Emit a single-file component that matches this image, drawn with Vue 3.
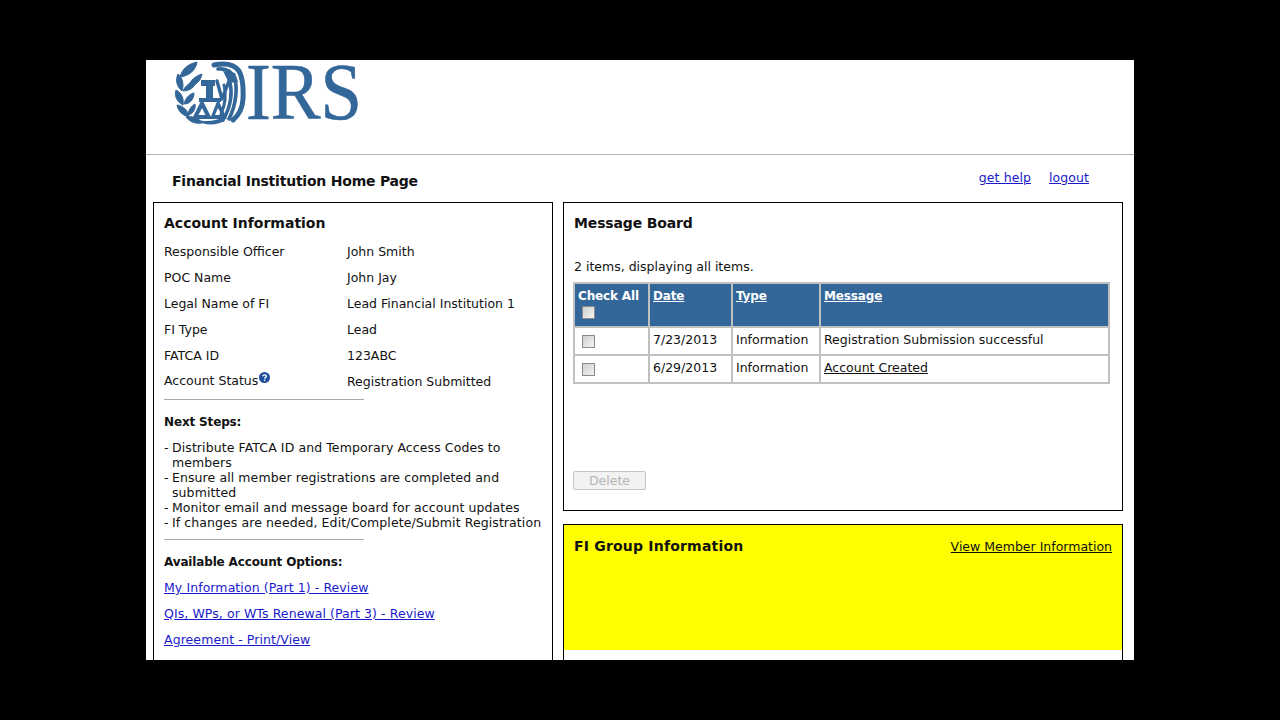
<script setup>
const accountRows = [
  { label: 'Responsible Officer', value: 'John Smith' },
  { label: 'POC Name', value: 'John Jay' },
  { label: 'Legal Name of FI', value: 'Lead Financial Institution 1' },
  { label: 'FI Type', value: 'Lead' },
  { label: 'FATCA ID', value: '123ABC' },
  { label: 'Account Status', value: 'Registration Submitted', help: true }
]

const nextSteps = [
  'Distribute FATCA ID and Temporary Access Codes to members',
  'Ensure all member registrations are completed and submitted',
  'Monitor email and message board for account updates',
  'If changes are needed, Edit/Complete/Submit Registration'
]

const options = [
  'My Information (Part 1) - Review',
  'QIs, WPs, or WTs Renewal (Part 3) - Review',
  'Agreement - Print/View'
]

const messages = [
  { date: '7/23/2013', type: 'Information', message: 'Registration Submission successful' },
  { date: '6/29/2013', type: 'Information', message: 'Account Created', link: true }
]
</script>

<template>
  <div class="screen">
    <div class="page">
      <header class="masthead">
        <div class="logo">
          <svg class="seal" viewBox="0 0 72 64" width="72" height="64" aria-hidden="true">
            <g fill="#336699" stroke="#336699" stroke-width="1">
              <!-- wreath -->
              <path d="M6 16 C8 8 14 3 23 1 C22 9 15 15 6 16Z" />
              <path d="M14 26 C16 20 21 15 28 13 C27 20 21 25 14 26Z" />
              <path d="M4 13 C1 19 3 26 8 30 C10 24 9 17 4 13Z" />
              <path d="M2 29 C0 35 3 41 9 44 C10 38 8 32 2 29Z" />
              <path d="M3 44 C4 50 8 54 15 56 C14 50 10 45 3 44Z" />
              <path d="M12 56 C16 61 21 63 28 62 C25 57 19 55 12 56Z" />
              <path d="M9 30 C11 25 16 21 22 20 C21 26 16 30 9 30Z" />
              <path d="M10 43 C11 38 15 33 20 32 C20 38 16 43 10 43Z" />
              <path d="M14 54 C14 50 17 45 21 43 C22 48 19 53 14 54Z" />
            </g>
            <g fill="#336699">
              <!-- eagle head, neck -->
              <path d="M27 19 L41 19 L41 25 L39 25 L39 40 L32 40 L32 25 L27 25Z" />
              <!-- scales -->
              <path fill-rule="evenodd" d="M28 38 L38 58 L18 58Z M28 47 L24.500 54 L31.500 54Z" />
              <path fill-rule="evenodd" d="M44 38 L53 58 L36 58Z M44 47 L41 54 L47.500 54Z" />
              <path d="M25 37 L47 37 L47 41 L25 41Z" />
              <path d="M20 58 C30 65 42 65 50 60 L50 56 C40 61 30 61 20 58Z" />
              <!-- head of the eagle on the right -->
              <path d="M49 10 L61 12 L64 21 L55 22Z" />
            </g>
            <g fill="none" stroke="#336699" stroke-linecap="round" stroke-linejoin="round">
              <path stroke-width="3.4" d="M43 20 L48 38 L55 20" />
              <!-- wing feathers -->
              <path stroke-width="5" d="M40 4 C50 2 60 3 65 10 C69 17 69.500 27 69 38 C68.500 47 65 54 59 59" />
              <path stroke-width="3.600" d="M44 8 C53 7 58 11 61 18 C63 26 63 42 55 58" />
              <path stroke-width="3.600" d="M56 22 C58 30 58 44 49 59" />
              <path stroke-width="3" d="M50 24 C52 32 52 42 47 53" />
            </g>
          </svg>
          <span class="wordmark">IRS</span>
        </div>
      </header>

      <div class="title-row">
        <h1>Financial Institution Home Page</h1>
        <nav class="top-links">
          <a href="#">get help</a>
          <a href="#">logout</a>
        </nav>
      </div>

      <div class="columns">
        <section class="panel account">
          <h2>Account Information</h2>
          <dl class="info">
            <div v-for="row in accountRows" :key="row.label" class="info-row">
              <dt :class="{ raised: row.help }">
                {{ row.label }}<svg v-if="row.help" class="help" viewBox="0 0 11 11" width="11" height="11" aria-hidden="true">
                  <circle cx="5.5" cy="5.5" r="5.5" fill="#1f4e9e" />
                  <path d="M3.7 4.2 C3.8 2.4 7.4 2.4 7.4 4.2 C7.4 5.4 5.6 5.3 5.6 6.7" fill="none" stroke="#fff" stroke-width="1.3" />
                  <rect x="4.9" y="7.600" width="1.4" height="1.4" fill="#fff" />
                </svg>
              </dt>
              <dd>{{ row.value }}</dd>
            </div>
          </dl>
          <hr />
          <h3>Next Steps:</h3>
          <ul class="steps">
            <li v-for="step in nextSteps" :key="step">{{ step }}</li>
          </ul>
          <hr class="second" />
          <h3 class="options-title">Available Account Options:</h3>
          <a v-for="option in options" :key="option" href="#" class="option">{{ option }}</a>
        </section>

        <div class="side">
          <section class="panel board">
            <h2 class="board-title">Message Board</h2>
            <p class="count">2 items, displaying all items.</p>
            <table>
              <thead>
                <tr>
                  <th class="col-check">Check All<br /><input type="checkbox" /></th>
                  <th class="col-date"><a href="#">Date</a></th>
                  <th class="col-type"><a href="#">Type</a></th>
                  <th><a href="#">Message</a></th>
                </tr>
              </thead>
              <tbody>
                <tr v-for="item in messages" :key="item.date">
                  <td><input type="checkbox" /></td>
                  <td>{{ item.date }}</td>
                  <td>{{ item.type }}</td>
                  <td>
                    <a v-if="item.link" href="#" class="plain-link">{{ item.message }}</a>
                    <template v-else>{{ item.message }}</template>
                  </td>
                </tr>
              </tbody>
            </table>
            <button class="delete" disabled>Delete</button>
          </section>

          <section class="panel group">
            <div class="group-head">
              <h2 class="group-title">FI Group Information</h2>
              <a href="#" class="plain-link">View Member Information</a>
            </div>
          </section>
        </div>
      </div>
    </div>
  </div>
</template>

<style>
html,
body {
  margin: 0;
  background: #000;
}
</style>

<style scoped>
.screen {
  width: 1280px;
  height: 720px;
  padding: 60px 146px;
  box-sizing: border-box;
  background: #000;
  overflow: hidden;
  font-family: "DejaVu Sans", Verdana, sans-serif;
  font-size: 12.5px;
  color: #111;
}
.page {
  height: 600px;
  background: #fff;
}
.masthead {
  height: 94px;
  border-bottom: 1px solid #b5b5b5;
}
.logo {
  display: flex;
  align-items: flex-start;
  padding: 1px 0 0 28px;
}
.seal {
  flex: none;
}
.wordmark {
  display: block;
  font-family: "Liberation Serif", "Times New Roman", serif;
  font-size: 81px;
  line-height: 81px;
  margin-top: -9px;
  color: #336699;
  -webkit-text-stroke: 0.6px #336699;
  transform: scaleX(0.92);
  transform-origin: left top;
}
.title-row {
  display: flex;
  justify-content: space-between;
  height: 47px;
  padding: 15px 45px 0 26px;
  box-sizing: border-box;
}
h1 {
  margin: 2px 0 0;
  font-size: 14px;
  line-height: 18px;
  font-weight: bold;
  letter-spacing: -0.22px;
}
.top-links {
  display: flex;
  gap: 18px;
  line-height: 16px;
  letter-spacing: 0.08px;
}
.top-links a,
.option {
  color: #1a1acc;
}
.columns {
  display: flex;
  align-items: flex-start;
  gap: 10px;
  height: 458px;
  padding-left: 7px;
  overflow: hidden;
}
.panel {
  border: 1px solid #000;
  box-sizing: border-box;
  padding: 10px;
}
h2 {
  margin: 0;
  font-size: 14px;
  line-height: 20px;
  font-weight: bold;
}
.board-title {
  letter-spacing: -0.15px;
}
.group-title {
  letter-spacing: 0.2px;
}
.account {
  width: 400px;
  height: 480px;
}
.info {
  margin: 6px 0 0;
}
.info-row {
  display: flex;
  height: 26px;
  line-height: 26px;
}
.info-row dt {
  width: 183px;
  flex: none;
}
.info-row dd {
  margin: 0;
}
.raised {
  margin-top: -1px;
}
.help {
  vertical-align: 2px;
  margin-left: 1px;
}
hr {
  width: 200px;
  height: 1px;
  margin: 4px 0 0;
  border: 0;
  background: #aaa;
}
h3 {
  margin: 14px 0 0;
  font-size: 12px;
  line-height: 16px;
  font-weight: bold;
  letter-spacing: -0.15px;
}
.steps {
  margin: 10px 0 0;
  padding: 0;
  list-style: none;
  line-height: 15px;
  letter-spacing: 0.09px;
}
.steps li {
  padding-left: 8px;
  position: relative;
}
.steps li::before {
  content: "-";
  position: absolute;
  left: 0;
}
.second {
  margin-top: 9px;
}
.options-title {
  margin-top: 14px;
}
.option {
  display: block;
  margin-top: 10px;
  line-height: 16px;
  letter-spacing: 0.08px;
}
.side {
  width: 560px;
  display: flex;
  flex-direction: column;
  gap: 13px;
}
.board {
  height: 309px;
}
.count {
  margin: 26px 0 0;
  line-height: 16px;
}
table {
  width: 537px;
  margin: 7px 0 0 -1px;
  border-collapse: collapse;
  table-layout: fixed;
  border: 2px solid #c0c0c0;
}
th,
td {
  border: 2px solid #c0c0c0;
  padding: 3px 3px 0;
  text-align: left;
  vertical-align: top;
  line-height: 17px;
}
th {
  height: 38px;
  padding-top: 4px;
  background: #336699;
  color: #fff;
  font-size: 12px;
  font-weight: bold;
  letter-spacing: -0.15px;
}
th a {
  color: #fff;
}
td {
  height: 23px;
}
.col-check {
  width: 67px;
}
.col-date {
  width: 75px;
}
.col-type {
  width: 80px;
}
input[type="checkbox"] {
  appearance: none;
  display: block;
  width: 13px;
  height: 13px;
  margin: 4px 0 0 4px;
  border: 1px solid #8a8a8a;
  box-sizing: border-box;
  background: linear-gradient(135deg, #cfcfcf, #f4f4f4);
}
th input[type="checkbox"] {
  margin-top: 1px;
}
.plain-link {
  color: #111;
}
.delete {
  display: block;
  width: 73px;
  height: 19px;
  margin: 87px 0 0 -1px;
  padding: 0;
  border: 1px solid #c4c4c4;
  border-radius: 2px;
  background: #f2f2f2;
  color: #b5b5b5;
  font: inherit;
}
.group {
  height: 200px;
  background: linear-gradient(#ff0 125px, #fff 125px);
  padding: 11px 10px 0;
}
.group-head {
  display: flex;
  justify-content: space-between;
  align-items: center;
}
</style>
